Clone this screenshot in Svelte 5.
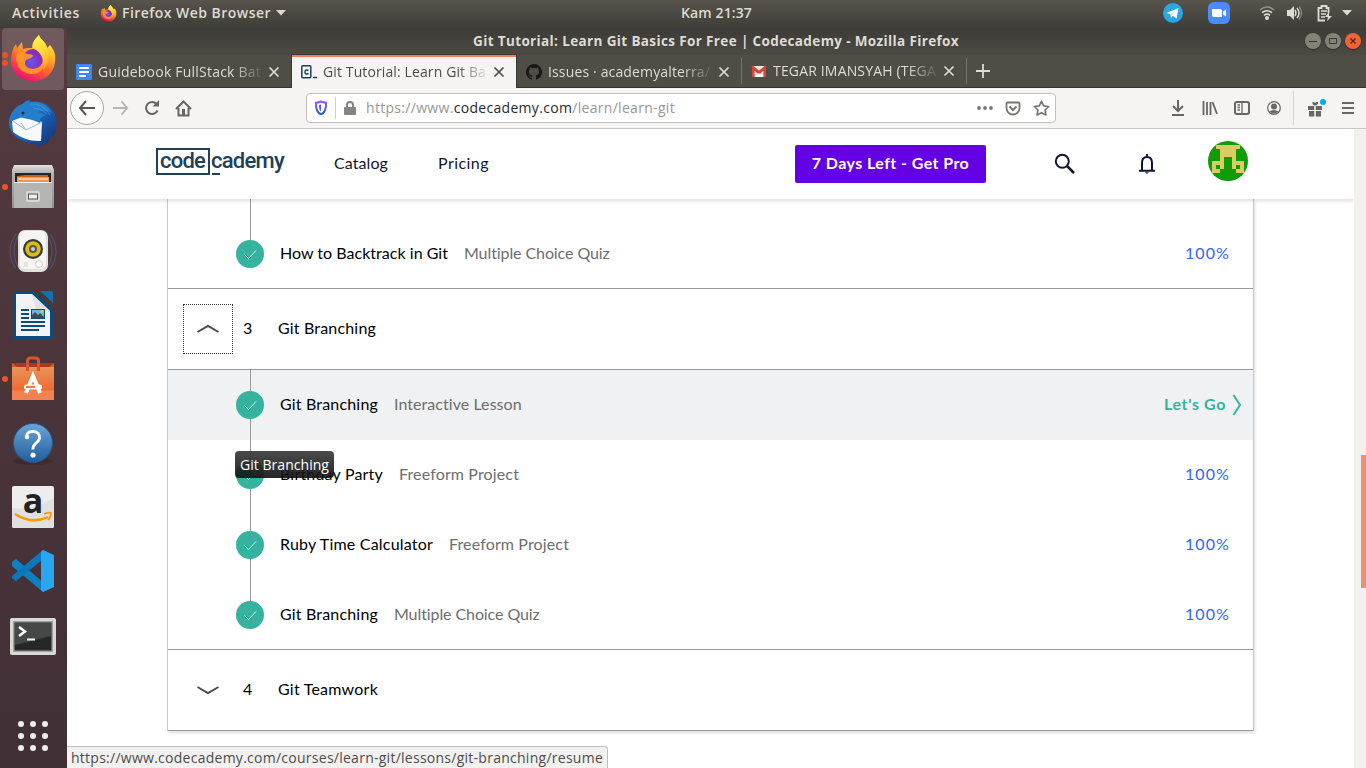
<script>
  // Spreads the letters of a label so that it fills a given width.
  function fit(node, width) {
    const natural = node.getBoundingClientRect().width;
    const count = Array.from(node.textContent).length;
    node.style.letterSpacing = (width - natural) / count + 'px';
  }

  const branching = [
    { name: 'Git Branching', w: 98, kind: 'Interactive Lesson', kw: 128, active: true },
    { name: 'Birthday Party', w: 103, kind: 'Freeform Project', kw: 120 },
    { name: 'Ruby Time Calculator', w: 153, kind: 'Freeform Project', kw: 120 },
    { name: 'Git Branching', w: 98, kind: 'Multiple Choice Quiz', kw: 146, last: true }
  ];
  const backtrack = { name: 'How to Backtrack in Git', w: 168, kind: 'Multiple Choice Quiz', kw: 146, last: true };
  const dots = [0, 1, 2, 3, 4, 5, 6, 7, 8];
</script>

{#snippet firefox()}
  <svg viewBox="0 0 48 48">
    <defs>
      <linearGradient id="fx" x1=".8" y1="0" x2=".3" y2="1"><stop offset="0" stop-color="#fff44f" /><stop offset=".3" stop-color="#ffc12c" /><stop offset=".6" stop-color="#ff6b2b" /><stop offset="1" stop-color="#ec0b72" /></linearGradient>
      <linearGradient id="fy" x1=".5" y1="0" x2=".7" y2="1"><stop offset="0" stop-color="#fff44f" /><stop offset=".5" stop-color="#ffd433" /><stop offset="1" stop-color="#ff9a2c" /></linearGradient>
      <radialGradient id="fp" cx=".4" cy=".65"><stop offset="0" stop-color="#6357ef" /><stop offset="1" stop-color="#8b2bbb" /></radialGradient>
    </defs>
    <path fill="url(#fx)" d="M30 0c1 5 7 6 8 13l3-3c5 6 6 11 5 17-1 11-10 19-22 19C11 46 2 37 2 25c0-6 2-12 5-16l1 4 5-6 1 7c3-1 6-1 9-1 0-6 3-9 7-13Z" />
    <circle cx="24" cy="24" r="10" fill="url(#fp)" />
    <path fill="#ff9a28" d="M8 18c4-2 7 0 11 1 3 0 5 1 5 2-1 2-5 3-7 4-3 5 1 9 7 9 6 0 10-4 10-10 3 8-2 15-11 15C12 39 5 29 8 18Z" opacity=".9" />
    <path fill="url(#fy)" d="M30 0c1 5 7 6 8 13 3 8 2 16-4 22 2-10-2-18-10-22 0-6 2-9 6-13Z" />
  </svg>
{/snippet}

{#snippet closeX()}
  <svg class="x" viewBox="0 0 12 12"><path d="M1.5 1.5l9 9M10.5 1.5l-9 9" fill="none" stroke="currentColor" stroke-width="1.7" /></svg>
{/snippet}

{#snippet lesson(item)}
  <div class="row" class:active={item.active} class:last={item.last}>
    <div class="rail">
      <span class="check"><svg viewBox="0 0 28 28"><path d="M8.5 14.5l4 4 7.5-8" fill="none" stroke="#fff" stroke-width=".8" /></svg></span>
    </div>
    <span class="name"><span use:fit={item.w}>{item.name}</span></span>
    <span class="kind"><span use:fit={item.kw}>{item.kind}</span></span>
    {#if item.active}
      <span class="go"><span use:fit={62}>Let's Go</span><svg viewBox="0 0 10 24"><path d="M1.5 2L8 12 1.5 22" fill="none" stroke="#35b39e" stroke-width="2" /></svg></span>
    {:else}
      <span class="score"><span use:fit={45}>100%</span></span>
    {/if}
  </div>
{/snippet}

<div class="screen">
  <header class="panel">
    <span class="activities"><span use:fit={68}>Activities</span></span>
    <span class="mini">{@render firefox()}</span>
    <span class="app"><span use:fit={149}>Firefox Web Browser</span></span>
    <svg class="caret" viewBox="0 0 10 6"><path d="M0 0h10L5 5.5Z" fill="#dfdbd2" /></svg>
    <span class="clock"><span use:fit={71}>Kam 21:37</span></span>
    <div class="tray">
      <svg width="20" height="20" viewBox="0 0 20 20"><circle cx="10" cy="10" r="10" fill="#2ca5e0" /><path d="M3.5 10L15.5 5l-2 10.5-3.5-2.8-2 2-.6-3.5Z" fill="#fff" /><path d="M7.4 11.2L13 7.5l-4.2 4.8-.8 2.4Z" fill="#c8daea" /></svg>
      <svg class="zoom" width="22" height="22" viewBox="0 0 22 22"><rect width="22" height="22" rx="6" fill="#4a8cff" /><path d="M4 7h8q2 0 2 2v6H6q-2 0-2-2ZM15 9.5L18 7.5v7L15 12.5Z" fill="#fff" /></svg>
      <svg class="wifi" width="16" height="14" viewBox="0 0 16 14"><g fill="none" stroke="#dfdbd2" stroke-width="1.6"><path d="M1 4q7-6 14 0" opacity=".45" /><path d="M3 6.7q5-4 10 0M5 9.3q3-2.4 6 0" /></g><circle cx="8" cy="12" r="2" fill="#dfdbd2" /></svg>
      <svg class="vol" width="17" height="16" viewBox="0 0 17 16"><path d="M1 5h3l4-4v14l-4-4H1Z" fill="#dfdbd2" /><g fill="none" stroke="#dfdbd2" stroke-width="1.4"><path d="M9 5q2 3 0 6M11 3q4 5 0 10" /><path d="M13 1.5q5 6.5 0 13" opacity=".4" /></g></svg>
      <svg class="bat" width="16" height="17" viewBox="0 0 16 17"><path d="M11.5 8V3H9.5V1h-5v2h-3v12.5H8" fill="none" stroke="#dfdbd2" stroke-width="1.8" /><path d="M4 6h6M4 9h5M4 12h4" stroke="#dfdbd2" stroke-width="1.5" /><path d="M12 7l-4 5h3l-1 4 5-5h-3Z" fill="#dfdbd2" /></svg>
      <svg class="caret" viewBox="0 0 10 6"><path d="M0 0h10L5 5.5Z" fill="#dfdbd2" /></svg>
    </div>
  </header>

  <div class="desktop">
    <nav class="dock">
      <div class="slot focused"><i></i><i></i>{@render firefox()}</div>
      <div class="slot">
        <svg viewBox="0 0 48 48"><defs><linearGradient id="tb" x1="0" y1="0" x2="1" y2="1"><stop offset="0" stop-color="#2c8ade" /><stop offset=".5" stop-color="#1863b8" /><stop offset="1" stop-color="#162a70" /></linearGradient></defs>
          <path d="M14 5Q17 1 21 1l-1 2Q38 0 46 15c3 10 2 16-2 23l-1-2c-2 4-4 8-8 10l1-3-6 5-3-1 3-3C10 46-1 33 0 22 1 13 8 6 14 5Z" fill="url(#tb)" />
          <path d="M3 22l10-4 20 5-1 19Q17 43 4 33Z" fill="#f7f9fb" /><path d="M4 22l13 9 16-8M17 31l-5-7" fill="none" stroke="#a5b5c1" />
          <path d="M10 18Q9 5 18 2l5 1Q37 2 43 14q-8-4-14-1l8 3q-7 2-6 8-8-4-17-5Z" fill="#237fc9" /><path d="M22 5q12-1 19 11M24 9q8 0 14 6" fill="none" stroke="#51a5e2" opacity=".6" /><circle cx="14" cy="14" r="1.5" fill="#182849" /></svg>
      </div>
      <div class="slot"><i></i>
        <svg viewBox="0 0 48 48"><defs><linearGradient id="fi" x2="0" y2="1"><stop offset="0" stop-color="#e3e3e2" /><stop offset=".18" stop-color="#b4b4b3" /><stop offset="1" stop-color="#8f8f8e" /></linearGradient></defs>
          <path d="M5 2h38l2 5v38H3V7Z" fill="url(#fi)" /><path d="M6 10h36v11H6Z" fill="#242424" /><path d="M8 13l8-1h23v10H8Z" fill="#c76413" /><path d="M8 14h32v8H8Z" fill="#f79649" /><path d="M9 16h30" stroke="#fff1da" /><path d="M5 19h38v26H5Z" fill="#b4b4b2" /><path d="M5 19.5h38" stroke="#eee" /><rect x="17" y="28" width="14" height="11" rx="2" fill="#d6d6d4" /><rect x="19.5" y="31" width="9" height="5" fill="#eee" stroke="#555" /></svg>
      </div>
      <div class="slot">
        <svg viewBox="0 0 48 48"><g fill="none" stroke="#5d6c9a" opacity=".45" stroke-width="1.3"><path d="M7 7Q-5 24 7 42M9 9Q1 24 9 40M41 7q12 17 0 35M39 9q8 15 0 31" /></g><rect x="9" y="3" width="30" height="42" rx="7" fill="#e0e0dc" /><rect x="11" y="4" width="26" height="38" rx="5" fill="#f5f5f2" /><circle cx="24" cy="22" r="10" fill="#37382f" /><circle cx="24" cy="22" r="7.8" fill="#d9b821" /><circle cx="24" cy="22" r="4" fill="#555a4c" /><circle cx="24" cy="22" r="2" fill="#c7cfcb" /><circle cx="30" cy="37" r="3.5" fill="#fafafa" stroke="#ccc" /><rect x="15" y="35" width="4" height="5" rx="1" fill="#e3e3e0" /></svg>
      </div>
      <div class="slot">
        <svg viewBox="0 0 48 48"><path d="M6 0h19l19 18v28q0 2-2 2H6q-2 0-2-2V2q0-2 2-2Z" fill="#0d4b7a" /><path d="M31 0h11q2 0 2 2v10Z" fill="#0c72b1" /><path d="M7 3h16l18 17v25H7Z" fill="#f1f3f5" /><path d="M23 3l18 17H27Z" fill="#d9dce0" opacity=".7" /><g stroke="#0b4c79" stroke-width="2"><path d="M12 19h8M12 23h8M12 27h8M12 31h24M12 35h24M12 39h18" /></g><path d="M22 18h14v10H22Z" fill="#0b4c79" /><path d="M23 19h12v8H23Z" fill="#68b8e5" /><path d="M23 27v-3l3-3 3 3 2-2 4 4v1Z" fill="#494b43" /><circle cx="33" cy="20.5" r="1.5" fill="#eac348" /></svg>
      </div>
      <div class="slot"><i></i>
        <svg viewBox="0 0 48 48"><defs><linearGradient id="bag" x2="0" y2="1"><stop offset="0" stop-color="#e9935a" /><stop offset=".7" stop-color="#ed6b32" /><stop offset=".72" stop-color="#f28251" /></linearGradient></defs><path d="M3 8h42v8H3Z" fill="#a93a17" /><path d="M3 8l5 4h32l5-4v5H3Z" fill="#d75b26" /><path d="M3 12h42v33H3Z" fill="url(#bag)" /><path d="M18.5 16V6q0-3 3-3h5q3 0 3 3v10" fill="none" stroke="#d6562a" stroke-width="3" /><path d="M17 38l7-17 7 17" fill="none" stroke="#fff" stroke-width="4" /><rect x="15" y="29.500" width="18" height="5" rx="2" fill="#fff" /><path d="M17 32h9" stroke="#ed6b32" stroke-width="1.8" /></svg>
      </div>
      <div class="slot">
        <svg viewBox="0 0 48 48"><defs><linearGradient id="help" x2="0" y2="1"><stop offset="0" stop-color="#6ba5d9" /><stop offset="1" stop-color="#225c9c" /></linearGradient></defs><ellipse cx="24" cy="42" rx="20" ry="4" fill="#231a20" opacity=".3" /><circle cx="24" cy="24" r="19.5" fill="url(#help)" stroke="#24598f" /><path d="M17.500 19q-.5-6.500 6-6.500 7.500 0 7 7-1 3-4 5-3 3-2.500 6" fill="none" stroke="#fff" stroke-width="2.8" /><circle cx="24" cy="36" r="2.6" fill="#fff" /><circle cx="18" cy="18" r="2.2" fill="#fff" /></svg>
      </div>
      <div class="slot">
        <svg viewBox="0 0 48 48"><rect x="3" y="3" width="42" height="42" rx="2" fill="#ededed" /><path d="M3 25Q25 28 45 15v28q0 2-2 2H5q-2 0-2-2Z" fill="#e0e0e0" /><text x="24" y="30" text-anchor="middle" class="amazon">a</text><path d="M6 31q17 11 33 3" fill="none" stroke="#f90" stroke-width="2.5" /><path d="M35 31q5-2 7-1 0 4-3 7" fill="none" stroke="#f90" stroke-width="1.8" /></svg>
      </div>
      <div class="slot">
        <svg viewBox="0 0 48 48"><path d="M3 15l4-3L37 38l-3 7L3 19Z" fill="#0f7fc4" /><path d="M3 29l31-26 3 7L7 34l-4-3Z" fill="#0b78bd" /><path d="M34 3l11 5v32l-11 5-2-2V5Z" fill="#2aa6f0" /></svg>
      </div>
      <div class="slot">
        <svg viewBox="0 0 48 48"><rect x="1" y="7" width="46" height="37" rx="2" fill="#d8d8d6" /><rect x="4" y="10" width="40" height="31" fill="#a0a19e" /><path d="M5.500 11.500h37v28h-37Z" fill="#262827" /><path d="M6 12h36v13L6 34Z" fill="#454846" /><path d="M10 16l6 4.500-6 4.500" fill="none" stroke="#fff" stroke-width="2.500" /><path d="M18 28.500h8" stroke="#fff" stroke-width="2" /></svg>
      </div>
      <div class="apps">{#each dots as d (d)}<b></b>{/each}</div>
    </nav>

    <main class="window">
      <div class="titlebar">
        <strong><span use:fit={486}>Git Tutorial: Learn Git Basics For Free | Codecademy - Mozilla Firefox</span></strong>
        <div class="controls">
          <svg viewBox="0 0 16 16"><circle cx="8" cy="8" r="8" fill="#85827a" /><path d="M4 8.500h8" stroke="#3a3934" /></svg>
          <svg viewBox="0 0 16 16"><circle cx="8" cy="8" r="8" fill="#85827a" /><path d="M4.500 5.500h7v5h-7Z" fill="none" stroke="#3a3934" /></svg>
          <svg viewBox="0 0 16 16"><circle cx="8" cy="8" r="8" fill="#ef6236" /><path d="M5.500 5.500l5 5m0-5l-5 5" stroke="#552517" stroke-width="1.200" /></svg>
        </div>
      </div>
      <div class="tabs">
        <div class="tab">
          <svg class="fav" viewBox="0 0 16 16"><rect width="16" height="16" rx="1" fill="#4285f4" /><path d="M3 4h10M3 8h10M3 12h7" stroke="#fff" stroke-width="1.800" /></svg>
          <span class="label"><span use:fit={163}>Guidebook FullStack Bat</span></span>{@render closeX()}
        </div>
        <div class="tab selected">
          <svg class="fav" viewBox="0 0 16 16"><rect x=".8" y="1.800" width="9" height="12" rx="1" fill="none" stroke="#204056" stroke-width="1.500" /><path d="M7.500 6.500q-3.500-1.500-3.500 1.500t3.500 1.500M12 13.500h4" fill="none" stroke="#204056" stroke-width="1.500" /></svg>
          <span class="label"><span use:fit={163}>Git Tutorial: Learn Git Ba</span></span>{@render closeX()}
        </div>
        <div class="tab third">
          <svg class="fav" viewBox="0 0 16 16"><path fill="#191717" d="M8 0a8 8 0 0 0-2.530 15.590c.4.070.550-.170.550-.380v-1.490c-2.230.480-2.700-.950-2.700-.950-.360-.920-.890-1.170-.890-1.170-.730-.500.060-.490.060-.490.800.060 1.230.830 1.230.830.710 1.220 1.870.870 2.330.660.070-.520.280-.870.500-1.070-1.770-.200-3.640-.890-3.640-3.950 0-.870.310-1.590.820-2.150-.080-.200-.360-1.020.080-2.120 0 0 .670-.220 2.200.820a7.600 7.600 0 0 1 4 0c1.530-1.040 2.200-.820 2.200-.820.440 1.100.160 1.920.080 2.120.510.560.820 1.280.820 2.150 0 3.070-1.870 3.750-3.650 3.950.290.250.540.730.540 1.480v2.200c0 .210.150.460.550.380A8 8 0 0 0 8 0Z" /></svg>
          <span class="label"><span use:fit={162}>Issues · academyalterra/</span></span>{@render closeX()}
        </div>
        <div class="tab divided">
          <svg class="fav" viewBox="0 0 16 16"><path d="M1 3h14v11H1Z" fill="#ececec" /><path d="M2.300 14V5L8 10l5.700-5v9" fill="none" stroke="#d44638" stroke-width="2.600" /><path d="M1 3l7 6 7-6" fill="none" stroke="#d44638" stroke-width="2" /><path d="M4 14l4-4 4 4Z" fill="#fff" /></svg>
          <span class="label"><span use:fit={163}>TEGAR IMANSYAH (TEGA</span></span>{@render closeX()}
        </div>
        <div class="newtab"><svg viewBox="0 0 14 14"><path d="M7 0v14M0 7h14" stroke="#dedbd2" stroke-width="1.800" /></svg></div>
      </div>

      <div class="toolbar">
        <div class="navbtns">
          <span class="back"><svg width="18" height="16" viewBox="0 0 18 16"><path d="M8 1L2 8l6 7M2 8h15" fill="none" stroke="#555551" stroke-width="2" /></svg></span>
          <svg width="17" height="16" viewBox="0 0 18 16"><path d="M10 1l6 7-6 7M16 8H1" fill="none" stroke="#b7b5b1" stroke-width="2" /></svg>
          <svg width="16" height="16" viewBox="0 0 16 16"><path d="M13.500 10.500A6 6 0 1 1 12.500 4" fill="none" stroke="#666662" stroke-width="2" /><path d="M15 0v6.500H8.500Z" fill="#666662" /></svg>
          <svg width="17" height="17" viewBox="0 0 17 17"><path d="M1 9l7.500-7.500L16 9M3.500 8v7.500h10V8" fill="none" stroke="#666662" stroke-width="2" /><path d="M7 9h3v6H7Z" fill="#666662" /></svg>
        </div>
        <div class="url">
          <svg width="14" height="16" viewBox="0 0 14 16"><defs><linearGradient id="shield" x2="0" y2="1"><stop offset="0" stop-color="#9059ff" /><stop offset="1" stop-color="#2461bf" /></linearGradient></defs><path d="M7 1.500q3 1.200 5 1.200c.3 6-1 10-5 11.500C3 12.700 1.700 8.700 2 2.700q2 0 5-1.200Z" fill="none" stroke="url(#shield)" stroke-width="2" /><path d="M7 4.500l-2 .6c0 3 .3 5 2 6.400Z" fill="#5856dd" /></svg>
          <span class="sep"></span>
          <svg width="12" height="15" viewBox="0 0 12 15"><path d="M3 7V4q0-3 3-3t3 3v3" fill="none" stroke="#85847f" stroke-width="2" /><rect y="6" width="12" height="8" rx="1" fill="#85847f" /></svg>
          <span class="address"><span use:fit={309}>https://www.<b>codecademy.com</b>/learn/learn-git</span></span>
          <div class="actions">
            <svg width="16" height="4" viewBox="0 0 16 4"><g fill="#777671"><circle cx="2" cy="2" r="1.900" /><circle cx="8" cy="2" r="1.900" /><circle cx="14" cy="2" r="1.900" /></g></svg>
            <svg width="16" height="15" viewBox="0 0 16 15"><path d="M2.500 1.500h11q1 0 1 1V7a6.500 6.500 0 0 1-13 0V2.500q0-1 1-1Z" fill="none" stroke="#777671" stroke-width="1.800" /><path d="M4.500 5.500L8 9l3.500-3.500" fill="none" stroke="#777671" stroke-width="2" /></svg>
            <svg width="17" height="16" viewBox="0 0 17 16"><path d="M8.500 1.300l2.200 4.500 5 .7-3.600 3.500.8 5-4.400-2.300L4.100 15l.8-5-3.600-3.500 5-.7Z" fill="none" stroke="#777671" stroke-width="1.700" stroke-linejoin="round" /></svg>
          </div>
        </div>
        <div class="tools">
          <svg width="14" height="16" viewBox="0 0 14 16"><path d="M7 0v11M2 6l5 5 5-5M1 15h12" fill="none" stroke="#666662" stroke-width="2" /></svg>
          <svg width="16" height="14" viewBox="0 0 16 14"><path d="M1.500 0v14M5 1v13M8.500 1v13M10.500 1l4.500 12" fill="none" stroke="#666662" stroke-width="1.800" /></svg>
          <svg width="16" height="14" viewBox="0 0 16 14"><rect x="1" y="1" width="14" height="12" rx="2" fill="none" stroke="#666662" stroke-width="2" /><path d="M8 1v12M3.500 4H6M3.500 6.500H6M3.500 9H6" stroke="#666662" stroke-width="1.300" /></svg>
          <svg width="14" height="14" viewBox="0 0 14 14"><circle cx="7" cy="7" r="6.300" fill="none" stroke="#666662" stroke-width="1.200" /><circle cx="7" cy="5.500" r="3" fill="#666662" /><path d="M2.500 10.500q4.500-3 9 0Q7 14.500 2.500 10.500Z" fill="#666662" /></svg>
          <span class="rule"></span>
          <svg class="gift" width="18" height="18" viewBox="0 0 18 18"><path d="M0 7h6.200v4H0ZM7.800 7H14v4H7.800ZM1 12h5.200v5.500H1ZM7.800 12H13v5.500H7.800ZM4.500 3H6l1 1 1-1h2v2L8 6.500H6L4.500 5Z" fill="#666662" /><circle cx="15" cy="3" r="3" fill="#00a8ff" /></svg>
          <svg width="12" height="12" viewBox="0 0 12 12"><path d="M0 1h12M0 6h12M0 11h12" stroke="#666662" stroke-width="2" /></svg>
        </div>
      </div>

      <div class="viewport">
        <div class="page">
          <header class="site">
            <div class="logo"><span class="box"><span use:fit={45}>code</span></span><span class="rest"><span use:fit={73}>cademy</span></span></div>
            <a class="catalog" href="#catalog"><span use:fit={54}>Catalog</span></a>
            <a class="pricing" href="#pricing"><span use:fit={51}>Pricing</span></a>
            <button class="pro"><span use:fit={157}>7 Days Left - Get Pro</span></button>
            <svg class="search" width="22" height="22" viewBox="0 0 22 22"><circle cx="8.300" cy="8.300" r="6.500" fill="none" stroke="#10162f" stroke-width="2" /><path d="M13 13l7 7" stroke="#10162f" stroke-width="2.500" /></svg>
            <svg class="bell" width="16" height="20" viewBox="0 0 16 20"><path d="M3 16V9q0-6 5-6t5 6v7" fill="none" stroke="#10162f" stroke-width="2" /><path d="M0 15.700h16v2H0ZM7 0h2v3H7ZM6 18.300h4Q8 21 6 18.300Z" fill="#10162f" /></svg>
            <svg class="avatar" width="40" height="40" viewBox="0 0 40 40"><circle cx="20" cy="20" r="20" fill="#119a0a" /><path d="M8 4h24v4h-4v12h8v12h-8v-4h-4V16h-8v12h-4v4H4V20h8V8H8Z" fill="#dacb62" /><path d="M8 24h4v4H8ZM28 24h4v4h-4Z" fill="#119a0a" /></svg>
          </header>
          <section class="syllabus">
            <div class="stub"></div>
            {@render lesson(backtrack)}
            <div class="unit">
              <span class="toggle focus"><svg viewBox="0 0 24 10"><path d="M1.500 8L12 2l10.500 6" fill="none" stroke="#4a4a4a" stroke-width="2" /></svg></span>
              <span class="num">3</span><span class="title"><span use:fit={98}>Git Branching</span></span>
            </div>
            {#each branching as item, i (i)}{@render lesson(item)}{/each}
            <div class="unit">
              <span class="toggle"><svg viewBox="0 0 24 10"><path d="M1.500 2L12 8l10.500-6" fill="none" stroke="#4a4a4a" stroke-width="2" /></svg></span>
              <span class="num">4</span><span class="title"><span use:fit={100}>Git Teamwork</span></span>
            </div>
          </section>
        </div>
        <div class="scroll"><span></span></div>
      </div>
    </main>
  </div>
  <div class="tooltip"><span use:fit={89}>Git Branching</span></div>
  <div class="status"><span use:fit={532}>https://www.codecademy.com/courses/learn-git/lessons/git-branching/resume</span></div>
</div>

<style>
  :global(body) { margin: 0; overflow: hidden; }
  .screen { position: relative; width: 1366px; height: 768px; overflow: hidden; display: flex; flex-direction: column; font: 14px/20px "Open Sans", "Noto Sans", sans-serif; white-space: nowrap; }
  .screen * { box-sizing: border-box; }
  svg { display: block; flex: none; overflow: visible; }
  .panel { height: 28px; flex: none; display: flex; align-items: center; background: linear-gradient(#57544c, #3e3d38); color: #dfdbd2; font-weight: 600; padding: 0 14px 2px 12px; }
  .activities { width: 88px; }
  .mini { width: 17px; }
  .mini svg { width: 17px; height: 17px; }
  .app { width: 159px; padding-left: 5px; }
  .caret { width: 10px; height: 6px; }
  .clock { margin-left: 395px; }
  .tray { margin-left: auto; display: flex; align-items: center; }
  .zoom { margin-left: 25px; }
  .wifi { margin-left: 29px; }
  .vol { margin-left: 11px; }
  .bat { margin-left: 14px; }
  .tray .caret { margin-left: 9px; }
  .desktop { flex: 1; display: flex; min-height: 0; }
  .dock { width: 67px; flex: none; background: linear-gradient(#543b40, #4a343a 50%, #403036); display: flex; flex-direction: column; }
  .slot { height: 62px; width: 62px; margin: 0 0 2px 2px; flex: none; position: relative; display: grid; place-items: center; border-radius: 4px; }
  .slot svg { width: 48px; height: 48px; }
  .focused { background: #705a5e; }
  .slot i { position: absolute; left: 0; top: 28px; width: 6px; height: 6px; border-radius: 50%; background: #e95420; }
  .focused i { top: 24px; }
  .focused i + i { top: 32px; }
  .amazon { font: bold 34px "Open Sans", sans-serif; fill: #222; }
  .apps { margin: auto auto 17px 18px; display: grid; grid-template-columns: repeat(3, 6px); gap: 6px; }
  .apps b { width: 6px; height: 6px; border-radius: 50%; background: #eeeeec; }
  .window { flex: 1; display: flex; flex-direction: column; min-width: 0; }
  .titlebar { height: 27px; flex: none; display: flex; align-items: center; background: linear-gradient(#3c3b37, #4d4a43); color: #dfdbd2; padding: 0 5px 1px 406px; }
  .titlebar strong { font-size: 13.5px; }
  .controls { margin-left: auto; display: flex; gap: 4px; }
  .controls svg { width: 16px; height: 16px; border-radius: 50%; box-shadow: 0 1px 1px #2b2a27; }
  .tabs { height: 33px; flex: none; display: flex; background: #504d46; border-bottom: 1px solid #33322e; color: #dedbd2; }
  .tab { width: 225px; display: flex; align-items: center; padding-left: 9px; border-top: 2px solid transparent; }
  .selected { width: 224px; background: #f5f4f2; color: #4c4c4c; border-top-color: #f47f56; outline: 1px solid #393833; height: 33px; clip-path: inset(-1px -1px 0 -1px); padding-bottom: 2px; }
  .third { padding-left: 10px; }
  .divided { border-image: linear-gradient(#0000 12%, #77746c 12% 88%, #0000 88%) 1; border-width: 0 1px; border-style: solid; width: 226px; }
  .fav { width: 16px; height: 16px; }
  .label { width: 164px; margin-left: 6px; overflow: hidden; mask-image: linear-gradient(90deg, #000 82%, #0002 99%); }
  .x { width: 12px; height: 12px; margin-left: 6px; }
  .newtab { padding: 9px; }
  .newtab svg { width: 14px; height: 14px; }
  .toolbar { height: 41px; flex: none; display: flex; align-items: center; background: #f5f4f2; border-bottom: 1px solid #cac8c5; }
  .navbtns { width: 239px; display: flex; align-items: center; padding-left: 3px; }
  .back { width: 34px; height: 34px; border: 1px solid #aaa9a6; border-radius: 50%; background: #fbfaf9; display: grid; place-items: center; margin-right: 8px; }
  .navbtns svg + svg { margin-left: 15px; }
  .url { width: 750px; height: 30px; border: 1px solid #c2c0bd; border-radius: 4px; background: #fff; display: flex; align-items: center; padding: 0 5px 0 7px; }
  .sep { width: 1px; height: 22px; background: #cfcdca; margin: 0 8px 0 7px; }
  .address { color: #999793; margin-left: 10px; }
  .address b { font-weight: 400; color: #292929; }
  .actions { margin-left: auto; display: flex; align-items: center; gap: 12px; }
  .tools { display: flex; align-items: center; margin-left: 115px; }
  .tools svg + svg { margin-left: 16.6px; }
  .rule { width: 1px; height: 34px; background: #d5d3d0; margin: 0 14px 0 12px; }
  .viewport { flex: 1; display: flex; min-height: 0; }
  .page { width: 1287px; overflow: hidden; background: #fff; font: 16px/24px Lato, "Open Sans", sans-serif; color: #10162f; }
  .site { position: relative; z-index: 1; height: 70px; display: flex; align-items: center; padding-left: 89px; background: #fff; box-shadow: 0 2px 4px #0002; }
  .logo { width: 178px; display: flex; font: 500 22px/24px Roboto, sans-serif; color: #204056; margin-top: -5px; }
  .box { width: 54px; height: 27px; border: 2.5px solid #204056; padding-left: 2px; line-height: 22px; }
  .rest { height: 27px; padding: 1px 0 0 1px; background: linear-gradient(#204056, #204056) 2px 100% / 8px 2px no-repeat; }
  a { color: #10162f; text-decoration: none; padding-bottom: 2px; }
  .catalog { width: 104px; }
  .pricing { width: 357px; }
  .pro { width: 191px; height: 38px; border: 0; border-radius: 2px; background: #6400e4; color: #fff; padding: 0 0 3px; font: bold 16px Lato, sans-serif; }
  .search { margin-left: 68px; }
  .bell { margin-left: 63px; }
  .avatar { margin: -6px 0 0 53px; }
  .syllabus { width: 1087px; margin-left: 100px; border: 1px solid #c8c8c8; border-top: 0; border-bottom: 0; color: #000; box-shadow: 1px 2px 3px #0002; }
  .stub { height: 20px; background: linear-gradient(#999, #999) 82px 0 / 1px 100% no-repeat; }
  .row { height: 70px; display: flex; align-items: center; padding-right: 23px; }
  .row.last { border-bottom: 1px solid #999; }
  .row.active { background: #f0f1f3; padding-right: 11px; }
  .rail { width: 28px; height: 100%; margin-left: 68px; display: grid; place-items: center; background: linear-gradient(#999, #999) 14px 0 / 1px 100% no-repeat; }
  .last .rail { background-size: 1px 40%; }
  .check { width: 28px; height: 28px; border-radius: 50%; background: #35b39e; }
  .name, .kind, .score, .go > span, .num, .title { padding-bottom: 2px; }
  .name { margin-left: 16px; }
  .kind { margin-left: 16px; color: #6d6d6d; }
  .score { margin-left: auto; color: #3069f0; }
  .go { margin-left: auto; color: #35b39e; font-weight: bold; display: flex; align-items: center; gap: 6px; }
  .go svg { width: 10px; height: 24px; }
  .unit { height: 81px; display: flex; align-items: center; border-bottom: 1px solid #999; padding-left: 15px; }
  .toggle { width: 50px; height: 50px; display: grid; place-items: center; }
  .toggle.focus { border: 1px dotted #333; }
  .toggle svg { width: 24px; height: 10px; }
  .num { width: 35px; margin-left: 10px; }
  .scroll { width: 12px; background: #f2f1ef; padding: 326px 0 0 7px; }
  .scroll span { display: block; width: 5px; height: 133px; background: #ef906a; }
  .tooltip { position: absolute; left: 235px; top: 451px; width: 99px; height: 27px; border-radius: 4px; background: linear-gradient(#393939e8, #111111e8); color: #fff; padding: 4px 5px; }
  .status { position: absolute; left: 67px; top: 746px; width: 541px; height: 23px; border: 1px solid #c0bfbb; border-left: 0; border-radius: 0 4px 0 0; background: #f2f1ef; color: #4c4c4c; padding: 1px 4px; }
</style>
